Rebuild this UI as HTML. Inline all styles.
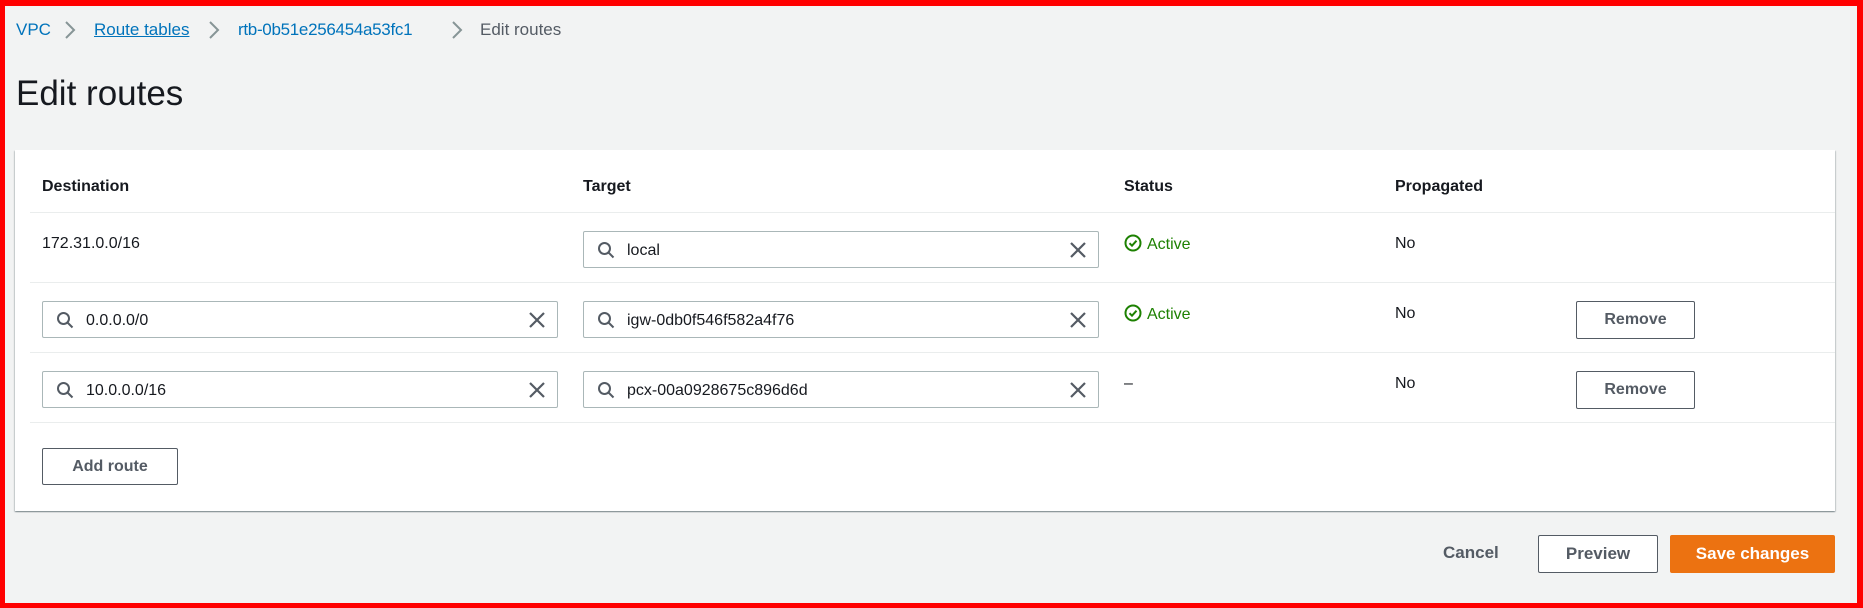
<!DOCTYPE html>
<html><head><meta charset="utf-8"><style>
*{box-sizing:border-box;margin:0;padding:0}
body{width:1863px;height:608px;overflow:hidden;background:#f2f3f3;font-family:"Liberation Sans",sans-serif;color:#16191f;position:relative}
.frame{position:absolute;inset:0;border:5px solid #ff0000;border-top-width:6px;border-right-width:6px;z-index:10;pointer-events:none}
.abs{position:absolute}
.bc{top:19px;font-size:17px;line-height:22px}
.link{color:#0073bb}
.chev{position:absolute;top:21px}
h1{position:absolute;left:16px;top:74px;font-size:35px;font-weight:400;line-height:40px}
.panel{position:absolute;left:15px;top:150px;width:1820px;height:361px;background:#fff;box-shadow:0 1px 1px rgba(0,28,36,.3),1px 1px 1px rgba(0,28,36,.15),-1px 1px 1px rgba(0,28,36,.15)}
.th{font-weight:700;font-size:16px;top:178px}
.hr{position:absolute;left:30px;width:1805px;height:1px;background:#eaeded}
.txt{font-size:16px}
.inp{position:absolute;height:37px;border:1px solid #aab7b8;border-radius:2px;background:#fff;font-size:16px}
.inp .t{position:absolute;left:43px;top:10px}
.inp svg.s{position:absolute;left:13px;top:9px}
.inp svg.x{position:absolute;right:12px;top:10px}
.btn{position:absolute;border:1px solid #545b64;border-radius:2px;background:#fff;font-weight:700;color:#545b64;font-size:16px;display:flex;align-items:center;justify-content:center}
.act{color:#1d8102;font-size:16px}
</style></head><body>
<div class="frame"></div>
<div class="abs bc" style="left:16px"><span class="link">VPC</span></div>
<svg class="chev" style="left:64px" width="12" height="18" viewBox="0 0 12 18"><path d="M2 1l8 8-8 8" fill="none" stroke="#879596" stroke-width="2"/></svg>
<div class="abs bc" style="left:94px"><span class="link" style="text-decoration:underline">Route tables</span></div>
<svg class="chev" style="left:208px" width="12" height="18" viewBox="0 0 12 18"><path d="M2 1l8 8-8 8" fill="none" stroke="#879596" stroke-width="2"/></svg>
<div class="abs bc" style="left:238px;letter-spacing:-0.3px"><span class="link">rtb-0b51e256454a53fc1</span></div>
<svg class="chev" style="left:451px" width="12" height="18" viewBox="0 0 12 18"><path d="M2 1l8 8-8 8" fill="none" stroke="#879596" stroke-width="2"/></svg>
<div class="abs bc" style="left:480px;color:#545b64">Edit routes</div>
<h1>Edit routes</h1>
<div class="panel"></div>
<div class="abs th" style="left:42px">Destination</div>
<div class="abs th" style="left:583px">Target</div>
<div class="abs th" style="left:1124px">Status</div>
<div class="abs th" style="left:1395px">Propagated</div>
<div class="hr" style="top:212px"></div>
<div class="hr" style="top:282px"></div>
<div class="hr" style="top:352px"></div>
<div class="hr" style="top:422px"></div>

<div class="abs txt" style="left:42px;top:235px">172.31.0.0/16</div>
<div class="abs txt" style="left:1395px;top:235px">No</div>
<div class="abs txt" style="left:1395px;top:305px">No</div>
<div class="abs txt" style="left:1395px;top:375px">No</div>
<div class="abs act" style="left:1124px;top:234px"><svg width="18" height="18" viewBox="0 0 18 18" style="vertical-align:-3px;margin-right:5px"><circle cx="9" cy="9" r="7.5" fill="none" stroke="#1d8102" stroke-width="2"/><path d="M5.5 9.2l2.5 2.5 4.5-5" fill="none" stroke="#1d8102" stroke-width="2"/></svg>Active</div>
<div class="abs act" style="left:1124px;top:304px"><svg width="18" height="18" viewBox="0 0 18 18" style="vertical-align:-3px;margin-right:5px"><circle cx="9" cy="9" r="7.5" fill="none" stroke="#1d8102" stroke-width="2"/><path d="M5.5 9.2l2.5 2.5 4.5-5" fill="none" stroke="#1d8102" stroke-width="2"/></svg>Active</div>
<div class="abs txt" style="left:1124px;top:375px">–</div>

<div class="inp" style="left:583px;top:231px;width:516px"><svg class="s" width="18" height="18" viewBox="0 0 18 18"><circle cx="7.5" cy="7.5" r="5.5" fill="none" stroke="#545b64" stroke-width="2"/><path d="M11.5 11.5l5 5" stroke="#545b64" stroke-width="2"/></svg><span class="t">local</span><svg class="x" width="16" height="16" viewBox="0 0 16 16"><path d="M1 1l14 14M15 1L1 15" stroke="#545b64" stroke-width="2.2"/></svg></div>
<div class="inp" style="left:42px;top:301px;width:516px"><svg class="s" width="18" height="18" viewBox="0 0 18 18"><circle cx="7.5" cy="7.5" r="5.5" fill="none" stroke="#545b64" stroke-width="2"/><path d="M11.5 11.5l5 5" stroke="#545b64" stroke-width="2"/></svg><span class="t">0.0.0.0/0</span><svg class="x" width="16" height="16" viewBox="0 0 16 16"><path d="M1 1l14 14M15 1L1 15" stroke="#545b64" stroke-width="2.2"/></svg></div>
<div class="inp" style="left:583px;top:301px;width:516px"><svg class="s" width="18" height="18" viewBox="0 0 18 18"><circle cx="7.5" cy="7.5" r="5.5" fill="none" stroke="#545b64" stroke-width="2"/><path d="M11.5 11.5l5 5" stroke="#545b64" stroke-width="2"/></svg><span class="t">igw-0db0f546f582a4f76</span><svg class="x" width="16" height="16" viewBox="0 0 16 16"><path d="M1 1l14 14M15 1L1 15" stroke="#545b64" stroke-width="2.2"/></svg></div>
<div class="inp" style="left:42px;top:371px;width:516px"><svg class="s" width="18" height="18" viewBox="0 0 18 18"><circle cx="7.5" cy="7.5" r="5.5" fill="none" stroke="#545b64" stroke-width="2"/><path d="M11.5 11.5l5 5" stroke="#545b64" stroke-width="2"/></svg><span class="t">10.0.0.0/16</span><svg class="x" width="16" height="16" viewBox="0 0 16 16"><path d="M1 1l14 14M15 1L1 15" stroke="#545b64" stroke-width="2.2"/></svg></div>
<div class="inp" style="left:583px;top:371px;width:516px"><svg class="s" width="18" height="18" viewBox="0 0 18 18"><circle cx="7.5" cy="7.5" r="5.5" fill="none" stroke="#545b64" stroke-width="2"/><path d="M11.5 11.5l5 5" stroke="#545b64" stroke-width="2"/></svg><span class="t">pcx-00a0928675c896d6d</span><svg class="x" width="16" height="16" viewBox="0 0 16 16"><path d="M1 1l14 14M15 1L1 15" stroke="#545b64" stroke-width="2.2"/></svg></div>

<div class="btn" style="left:1576px;top:301px;width:119px;height:38px">Remove</div>
<div class="btn" style="left:1576px;top:371px;width:119px;height:38px">Remove</div>
<div class="btn" style="left:42px;top:448px;width:136px;height:37px">Add route</div>

<div class="abs" style="left:1443px;top:543px;font-size:17px;font-weight:700;color:#545b64">Cancel</div>
<div class="btn" style="left:1538px;top:535px;width:120px;height:38px;font-size:17px">Preview</div>
<div class="btn" style="left:1670px;top:535px;width:165px;height:38px;font-size:17px;background:#ec7211;border-color:#ec7211;color:#fff">Save changes</div>
</body></html>
